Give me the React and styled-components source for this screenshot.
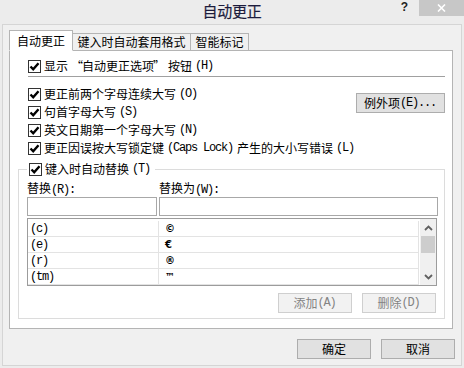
import React from 'react';
import styled, { createGlobalStyle } from 'styled-components';

const Global = createGlobalStyle`
  html, body { margin: 0; padding: 0; }
  body {
    width: 464px; height: 368px; overflow: hidden;
    background: #ececec;
    font-family: "Noto Sans CJK SC", "Noto Sans", sans-serif;
    font-size: 12px; color: #000;
  }
  * { box-sizing: border-box; }
`;

const Window = styled.div`
  width: 464px; height: 368px;
  background: #ececec;
  display: flex; flex-direction: column;
`;

const TitleBar = styled.div`
  height: 24px;
  display: grid;
  grid-template-columns: 1fr auto 1fr;
`;

const Title = styled.div`
  grid-column: 2;
  align-self: center;
  font-size: 15px;
  line-height: 20px;
  color: #1c1c3c;
  letter-spacing: -0.2px;
  padding-bottom: 2px;
  -webkit-text-stroke: 0.2px #1c1c3c;
`;

const Controls = styled.div`
  grid-column: 3;
  justify-self: end;
  align-self: start;
  display: flex;
  align-items: flex-start;
`;

const Help = styled.span`
  font-family: "Liberation Sans", sans-serif;
  font-weight: bold;
  font-size: 12px;
  line-height: 12px;
  color: #222;
  margin: 1px 11px 0 0;
`;

const CloseBtn = styled.div`
  width: 45px; height: 16px;
  background: #c7c7c7;
  display: flex; align-items: center; justify-content: center;
`;

const Client = styled.div`
  flex: 1;
  margin: 0 2px 2px 2px;
  border: 1px solid #d5d5d5;
  background: #f0f0f0;
  padding: 5px 6px 0 6px;
  display: flex; flex-direction: column;
`;

const TabRow = styled.div`
  display: flex;
  align-items: flex-end;
  height: 21px;
  margin-bottom: -1px;
  position: relative;
  z-index: 1;
`;

const Tab = styled.div`
  height: ${p => (p.$active ? '21px' : '17px')};
  margin-bottom: ${p => (p.$active ? '0' : '1px')};
  width: ${p => p.$w}px;
  margin-left: ${p => (p.$first ? '0' : '-1px')};
  background: ${p => (p.$active ? '#fff' : '#f0f0f0')};
  border: 1px solid #b4b4b4;
  border-bottom: ${p => (p.$active ? '1px solid #fff' : 'none')};
  display: flex; align-items: center; justify-content: center;
  padding-top: ${p => (p.$active ? '1px' : '0')};
  line-height: 14px;
  position: relative;
  z-index: ${p => (p.$active ? 2 : 1)};
`;

const Panel = styled.div`
  width: 444px; height: 279px;
  background: #fff;
  border: 1px solid #b4b4b4;
  padding: 6px 7px 0 0;
  display: flex; flex-direction: column;
`;

const CheckRow = styled.label`
  height: 18px;
  display: flex; align-items: center;
  gap: 3px;
  padding-left: ${p => p.$indent ?? 18}px;
  white-space: nowrap;
  line-height: 14px;
`;

const Box = styled.span`
  width: 13px; height: 13px;
  flex: none;
  border: 1px solid #333;
  background: #fff;
  display: flex; align-items: center; justify-content: center;
`;

const Lat = styled.span`
  font-family: "Liberation Mono", monospace;
  font-size: 12px;
  letter-spacing: -1.2px;
  padding-right: 1px;
`;

const Quote = styled.span`
  margin-left: ${p => (p.$open ? '0' : '-4px')};
  margin-right: ${p => (p.$open ? '-4px' : '0')};
`;

const Separator = styled.div`
  height: 1px;
  background: #a0a0a0;
  margin: 1px 0 0 18px;
`;

const OptionsBlock = styled.div`
  display: flex;
  justify-content: space-between;
  margin-top: 8px;
`;

const OptionList = styled.div`
  display: flex; flex-direction: column;
`;

const Button = styled.div`
  width: ${p => p.$w ?? 74}px;
  height: 20px;
  flex: none;
  background: ${p => (p.$disabled ? '#f2f2f2' : '#e1e1e1')};
  border: 1px solid ${p => (p.$disabled ? '#cfcfcf' : '#adadad')};
  color: ${p => (p.$disabled ? '#838383' : '#000')};
  display: flex; align-items: center; justify-content: center;
  line-height: 14px;
  margin-top: ${p => p.$top ?? 0}px;
  white-space: nowrap;
`;

const Group = styled.fieldset`
  margin: 3px 0 0 8px;
  padding: 1px 7px 5px 8px;
  border: 1px solid #dcdcdc;
  min-width: 0;
`;

const Legend = styled.legend`
  padding: 0 4px 0 2px;
  margin: 0;
`;

const FieldGrid = styled.div`
  display: grid;
  grid-template-columns: 130px 279px;
  column-gap: 2px;
`;

const FieldLabel = styled.div`
  height: 18px;
  line-height: 18px;
  white-space: nowrap;
`;

const Input = styled.div`
  height: 19px;
  border: 1px solid #a8a8a8;
  background: #fff;
`;

const ListBox = styled.div`
  margin-top: 2px;
  height: 68px;
  border: 1px solid #9c9c9c;
  background: #fff;
  display: flex;
`;

const ListRows = styled.div`
  flex: 1;
  padding-top: 2px;
  display: flex; flex-direction: column;
`;

const ListRow = styled.div`
  height: 16px;
  display: grid;
  grid-template-columns: 131px 1fr;
  border-bottom: 1px solid #e3e3e3;
`;

const Cell = styled.div`
  border-right: 1px solid #e3e3e3;
  padding-left: ${p => p.$pad}px;
  display: flex; align-items: center;
  font-family: ${p => (p.$sym ? '"DejaVu Sans", sans-serif' : '"Liberation Mono", monospace')};
  font-size: ${p => (p.$sym ? '10px' : '12px')};
  font-weight: ${p => (p.$sym ? 'bold' : 'normal')};
  letter-spacing: ${p => (p.$sym ? '0' : '-1.2px')};
`;

const ScrollBar = styled.div`
  width: 17px;
  background: #f0f0f0;
  display: flex; flex-direction: column;
  border-left: 1px solid #fff;
`;

const Arrow = styled.div`
  height: 17px;
  display: flex; align-items: center; justify-content: center;
`;

const Thumb = styled.div`
  height: 17px;
  margin: 0 1px;
  background: #cdcdcd;
`;

const Spacer = styled.div`flex: 1;`;

const ButtonRow = styled.div`
  display: flex;
  justify-content: flex-end;
  gap: 10px;
  margin-top: ${p => p.$top}px;
  padding-right: ${p => p.$right}px;
`;

const Check = () => (
  <Box>
    <svg width="11" height="11" viewBox="0 0 11 11">
      <path d="M1.5 5.5 L4.2 8.3 L9.5 2.2" fill="none" stroke="#000" strokeWidth="2.4" />
    </svg>
  </Box>
);

const Chevron = ({ up }) => (
  <svg width="9" height="6" viewBox="0 0 9 6">
    <path d={up ? 'M1 5 L4.5 1.5 L8 5' : 'M1 1 L4.5 4.5 L8 1'} fill="none" stroke="#606060" strokeWidth="1.8" />
  </svg>
);

const rows = [
  ['(c)', '©'],
  ['(e)', '€'],
  ['(r)', '®'],
  ['(tm)', '™'],
];

export default function App() {
  return (
    <>
      <Global />
      <Window>
        <TitleBar>
          <Title>自动更正</Title>
          <Controls>
            <Help>?</Help>
            <CloseBtn>
              <svg width="9" height="8" viewBox="0 0 9 8">
                <path d="M1 0.5 L8 7.5 M8 0.5 L1 7.5" stroke="#fff" strokeWidth="1.6" />
              </svg>
            </CloseBtn>
          </Controls>
        </TitleBar>
        <Client>
          <TabRow>
            <Tab $active $first $w={64}>自动更正</Tab>
            <Tab $w={119}>键入时自动套用格式</Tab>
            <Tab $w={59}>智能标记</Tab>
          </TabRow>
          <Panel>
            <CheckRow><Check />显示<Quote $open>“</Quote>自动更正选项<Quote>”</Quote>按钮<Lat>(H)</Lat></CheckRow>
            <Separator />
            <OptionsBlock>
              <OptionList>
                <CheckRow><Check />更正前两个字母连续大写<Lat>(O)</Lat></CheckRow>
                <CheckRow><Check />句首字母大写<Lat>(S)</Lat></CheckRow>
                <CheckRow><Check />英文日期第一个字母大写<Lat>(N)</Lat></CheckRow>
                <CheckRow><Check />更正因误按大写锁定键<Lat>(Caps Lock)</Lat>产生的大小写错误<Lat>(L)</Lat></CheckRow>
              </OptionList>
              <Button $w={89} $top={8}>例外项<Lat>(E)...</Lat></Button>
            </OptionsBlock>
            <Group>
              <Legend>
                <CheckRow $indent={0}><Check />键入时自动替换<Lat>(T)</Lat></CheckRow>
              </Legend>
              <FieldGrid>
                <FieldLabel>替换<Lat>(R):</Lat></FieldLabel>
                <FieldLabel>替换为<Lat>(W):</Lat></FieldLabel>
                <Input />
                <Input />
              </FieldGrid>
              <ListBox>
                <ListRows>
                  {rows.map(([a, b]) => (
                    <ListRow key={a}>
                      <Cell $pad={2}>{a}</Cell>
                      <Cell $pad={6} $sym>{b}</Cell>
                    </ListRow>
                  ))}
                </ListRows>
                <ScrollBar>
                  <Arrow><Chevron up /></Arrow>
                  <Thumb />
                  <Spacer />
                  <Arrow><Chevron /></Arrow>
                </ScrollBar>
              </ListBox>
              <ButtonRow $top={7} $right={1}>
                <Button $disabled>添加<Lat>(A)</Lat></Button>
                <Button $disabled>删除<Lat>(D)</Lat></Button>
              </ButtonRow>
            </Group>
          </Panel>
          <ButtonRow $top={10} $right={0}>
            <Button>确定</Button>
            <Button>取消</Button>
          </ButtonRow>
        </Client>
      </Window>
    </>
  );
}
